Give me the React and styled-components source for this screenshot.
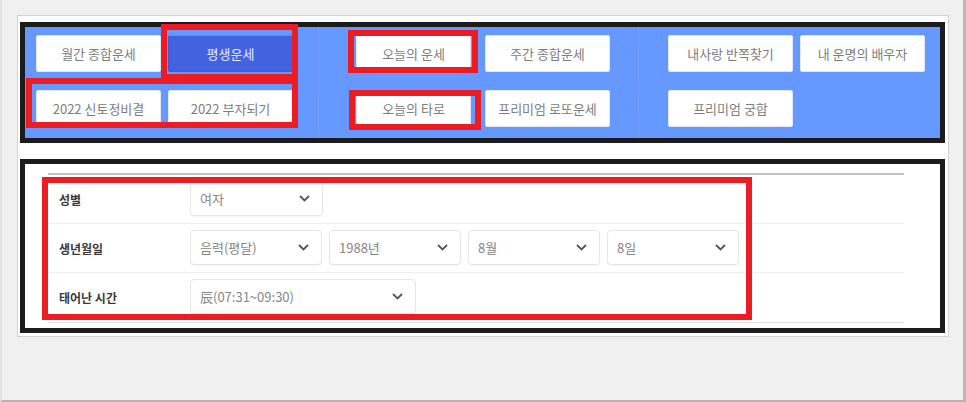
import React from "react";
import styled, { createGlobalStyle } from "styled-components";

const GlobalStyle = createGlobalStyle`
	html, body {
		margin: 0;
		padding: 0;
		background: #f1f1f1;
	}
	* {
		box-sizing: border-box;
	}
`;

const Page = styled.div`
	width: 966px;
	height: 402px;
	padding: 15px 0 0 17px;
	background: #f0f0f0;
	border-left: 2px solid #e2e2e2;
	border-right: 3px solid #b9b9b9;
	border-bottom: 2px solid #b4b4b4;
	font-family: "Noto Sans CJK KR", "Noto Sans", sans-serif;
	overflow: hidden;
`;

const Card = styled.div`
	width: 932px;
	height: 322px;
	margin-left: -2px;
	padding: 6px 2px 0 2px;
	background: #ffffff;
	border: 1px solid #d3d3d3;
`;

const NavFrame = styled.div`
	position: relative;
	width: 925px;
	height: 121px;
	border: 5px solid #1c1c1c;
	background: #6699ff;
	display: grid;
	grid-template-columns: 293px 320px 1fr;
`;

const NavColumn = styled.div`
	display: grid;
	grid-template-columns: ${(p) => p.$cols || "125px 125px"};
	grid-auto-rows: 37px;
	column-gap: ${(p) => p.$gap || 8}px;
	row-gap: 18px;
	padding: 8px 0 0 ${(p) => p.$pad}px;
	border-left: ${(p) => (p.$divider ? "1px solid #74a3ff" : "none")};
	align-content: start;
`;

const NavButton = styled.button`
	width: 100%;
	height: 37px;
	border: 1px solid ${(p) => (p.$active ? "#3d5ad9" : "#e4e8f2")};
	border-top-color: ${(p) => (p.$active ? "#6a86f0" : "#e4e8f2")};
	border-radius: 2px;
	background: ${(p) => (p.$active ? "#4262e0" : "#ffffff")};
	color: ${(p) => (p.$active ? "#e6ebff" : "#7d7d7d")};
	font-family: "Noto Sans CJK KR", "Noto Sans", sans-serif;
	font-size: 13px;
	padding: 0;
	cursor: pointer;
`;

const RedBox = styled.div`
	position: absolute;
	left: ${(p) => p.$x}px;
	top: ${(p) => p.$y}px;
	width: ${(p) => p.$w}px;
	height: ${(p) => p.$h}px;
	border: 6px solid #ec1c24;
	pointer-events: none;
`;

const FormFrame = styled.div`
	position: relative;
	width: 925px;
	height: 174px;
	margin-top: 16px;
	border: 5px solid #1c1c1c;
	background: #ffffff;
	padding: 9px 36px 0 23px;
`;

const FormTable = styled.div`
	border-top: 2px solid #c4c4c4;
	border-bottom: 1px solid #dcdcdc;
`;

const FormRow = styled.div`
	display: grid;
	grid-template-columns: 142px 1fr;
	align-items: center;
	height: ${(p) => p.$h}px;
	border-top: ${(p) => (p.$first ? "none" : "1px solid #eeeeee")};
`;

const Label = styled.div`
	padding-left: 11px;
	font-size: 12px;
	font-weight: 700;
	color: #3a3a3a;
`;

const Fields = styled.div`
	display: flex;
	gap: 7px;
	margin-top: -2px;
`;

const Select = styled.div`
	display: flex;
	align-items: center;
	justify-content: space-between;
	width: ${(p) => p.$w || 132}px;
	height: 35px;
	padding: 0 12px 0 9px;
	border: 1px solid #e6e6e6;
	border-radius: 4px;
	box-shadow: 0 1px 1px rgba(0, 0, 0, 0.04);
	font-size: 13px;
	color: #858585;
	background: #fff;
`;

const Chevron = () => (
	<svg width="11" height="7" viewBox="0 0 11 7">
		<path d="M1 1l4.5 4.5L10 1" fill="none" stroke="#555" strokeWidth="1.8" />
	</svg>
);

const Field = ({ children, w }) => (
	<Select $w={w}>
		<span>{children}</span>
		<Chevron />
	</Select>
);

const App = () => {
	return (
		<>
			<GlobalStyle />
			<Page>
				<Card>
					<NavFrame>
						<NavColumn $pad={11} $gap={7}>
							<NavButton>월간 종합운세</NavButton>
							<NavButton $active>평생운세</NavButton>
							<NavButton>2022 신토정비결</NavButton>
							<NavButton>2022 부자되기</NavButton>
						</NavColumn>
						<NavColumn $pad={37} $gap={14} $cols="115px 125px" $divider>
							<NavButton>오늘의 운세</NavButton>
							<NavButton>주간 종합운세</NavButton>
							<NavButton>오늘의 타로</NavButton>
							<NavButton>프리미엄 로또운세</NavButton>
						</NavColumn>
						<NavColumn $pad={29} $gap={7} $divider>
							<NavButton>내사랑 반쪽찾기</NavButton>
							<NavButton>내 운명의 배우자</NavButton>
							<NavButton>프리미엄 궁합</NavButton>
						</NavColumn>
						<RedBox $x={136} $y={-3} $w={137} $h={56} />
						<RedBox $x={1} $y={51} $w={272} $h={50} />
						<RedBox $x={323} $y={3} $w={130} $h={43} />
						<RedBox $x={324} $y={63} $w={132} $h={40} />
					</NavFrame>
					<FormFrame>
						<FormTable>
							<FormRow $first $h={48}>
								<Label>성별</Label>
								<Fields>
									<Field w={133}>여자</Field>
								</Fields>
							</FormRow>
							<FormRow $h={49}>
								<Label>생년월일</Label>
								<Fields>
									<Field>음력(평달)</Field>
									<Field>1988년</Field>
									<Field>8월</Field>
									<Field>8일</Field>
								</Fields>
							</FormRow>
							<FormRow $h={50}>
								<Label>태어난 시간</Label>
								<Fields>
									<Field w={226}>辰(07:31~09:30)</Field>
								</Fields>
							</FormRow>
						</FormTable>
						<RedBox $x={17} $y={13} $w={710} $h={143} />
					</FormFrame>
				</Card>
			</Page>
		</>
	);
};

export default App;
